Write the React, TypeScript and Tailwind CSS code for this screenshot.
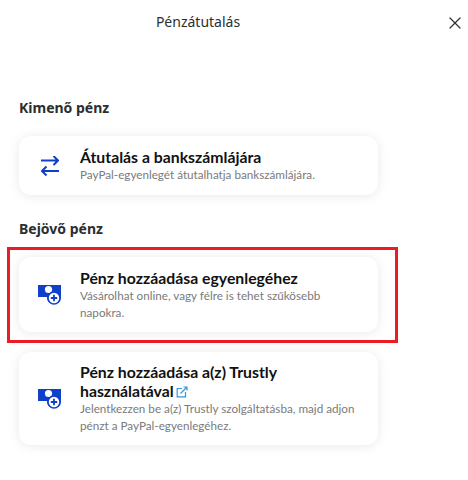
import React from 'react';
import { X } from 'lucide-react';

const AddMoneyIcon: React.FC = () => (
  <svg viewBox="0 0 23 20" className="w-[23px] h-[20px]">
    <path d="M0 0h23v12a7 7 0 0 1-14 0H0z" fill="#1040c8" />
    <circle cx="10.5" cy="4.5" r="3.6" fill="#fff" />
    <circle cx="16" cy="13" r="6" fill="#fff" stroke="#1040c8" strokeWidth="1.6" />
    <path d="M16 9.8v6.4M12.8 13h6.4" stroke="#1040c8" strokeWidth="1.8" />
  </svg>
);

const TransferIcon: React.FC = () => (
  <svg viewBox="0 0 18 20" className="w-[18px] h-[20px]" fill="none" stroke="#1040c8" strokeWidth="2">
    <path d="M0 4.5h17M12.5 0l4.5 4.5L12.5 9" />
    <path d="M18 15H1M5.5 10.500L1 15l4.500 4.500" />
  </svg>
);

const ExternalIcon: React.FC = () => (
  <svg viewBox="0 0 12 12" className="inline-block w-[12px] h-[12px] ml-[2px] align-[-1px]" fill="none" stroke="#2f97e0" strokeWidth="1.200">
    <path d="M6 2.500H1.200v8.300h8.300V6" />
    <path d="M4.500 7.500L10.500 1.500M7.500 1h3.500v3.500" />
  </svg>
);

const Card: React.FC<{ icon: React.ReactNode; title: React.ReactNode; text: string; className?: string }> = ({
  icon,
  title,
  text,
  className,
}) => (
  <div className={`flex items-center rounded-xl bg-white shadow-[0_1px_12px_rgba(0,0,0,0.09)] pr-4 ${className}`}>
    <div className="w-[61px] shrink-0 flex justify-center">{icon}</div>
    <div className="-mt-[1px]">
      <p className="font-['Lato',sans-serif] text-[15.800px] leading-[19px] font-bold text-[#111]">{title}</p>
      <p className="font-['Lato',sans-serif] text-[11.700px] leading-[17px] text-[#7a7a7a]">{text}</p>
    </div>
  </div>
);

export default function App() {
  return (
    <div className="w-[468px] h-[480px] bg-white overflow-hidden font-['Noto_Sans',sans-serif] text-[#2c2e2f]">
      <div className="h-[45px] relative flex justify-center pt-[12px] pr-[72px]">
        <h1 className="text-[14px] leading-[20px]">Pénzátutalás</h1>
        <button className="absolute right-[3px] top-[13px] text-[#333]">
          <X size={20} strokeWidth={1.5} />
        </button>
      </div>

      <div className="pl-[19px] w-[378px] pt-[54px]">
        <h2 className="text-[14px] leading-[18px] font-bold mb-[19px]">Kimenő pénz</h2>
        <Card icon={<TransferIcon />} title="Átutalás a bankszámlájára" text="PayPal-egyenlegét átutalhatja bankszámlájára." className="h-[59px]" />

        <h2 className="text-[14px] leading-[18px] font-bold mt-[25px] mb-[19px]">Bejövő pénz</h2>
        <div className="relative mb-[20px]">
          <Card
            icon={<AddMoneyIcon />}
            title="Pénz hozzáadása egyenlegéhez"
            text="Vásárolhat online, vagy félre is tehet szűkösebb napokra."
            className="h-[75px]"
          />
          <div className="absolute -left-[12px] -right-[20px] -top-[10px] -bottom-[11px] border-[3px] border-[#ed1c24]" />
        </div>

        <Card
          icon={<AddMoneyIcon />}
          title={
            <>
              Pénz hozzáadása a(z) Trustly használatával
              <ExternalIcon />
            </>
          }
          text="Jelentkezzen be a(z) Trustly szolgáltatásba, majd adjon pénzt a PayPal-egyenlegéhez."
          className="h-[93px]"
        />
      </div>
    </div>
  );
}
